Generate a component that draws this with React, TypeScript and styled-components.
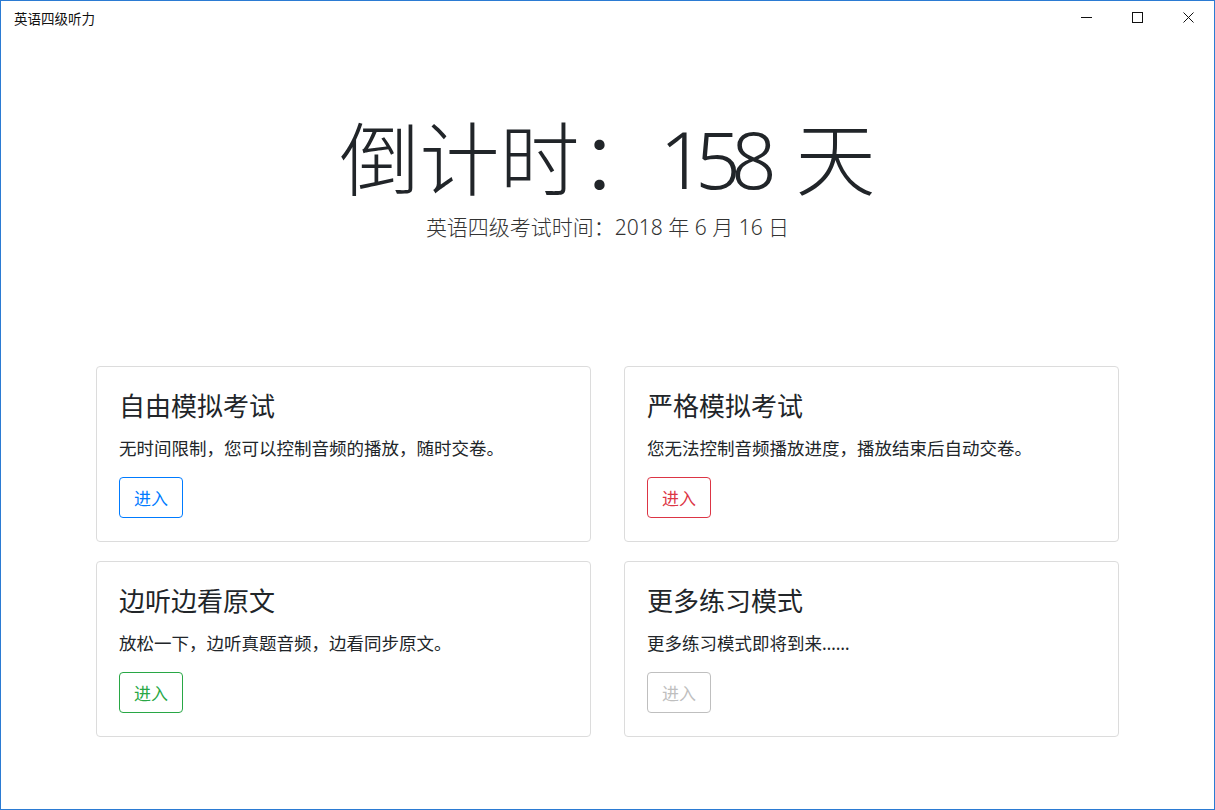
import styled, { createGlobalStyle } from 'styled-components'

const GlobalStyle = createGlobalStyle`
  html, body {
    margin: 0;
    padding: 0;
    background: #ffffff;
  }
  body {
    font-family: "Noto Sans", "Noto Sans CJK SC", sans-serif;
    color: #212529;
  }
  * {
    box-sizing: border-box;
  }
`

const Window = styled.div`
  width: 1215px;
  height: 810px;
  border: 1px solid #2b7bd3;
  display: flex;
  flex-direction: column;
  background: #fff;
  overflow: hidden;
`

const TitleBar = styled.div`
  height: 33px;
  display: flex;
  align-items: center;
  justify-content: space-between;
  flex-shrink: 0;
`

const TitleText = styled.div`
  padding-left: 13px;
  font-size: 13.5px;
  color: #111;
  font-family: "Noto Sans CJK SC", sans-serif;
`

const WindowButtons = styled.div`
  display: flex;
  height: 100%;
`

const WindowButton = styled.div`
  width: 51px;
  height: 100%;
  display: flex;
  align-items: center;
  justify-content: center;
  color: #111;
`

const Hero = styled.header`
  display: flex;
  flex-direction: column;
  align-items: center;
  padding-top: 76px;
`

const Countdown = styled.h1`
  margin: 0;
  font-size: 80px;
  font-weight: 300;
  line-height: 1.2;
  color: #212529;
`

// the digits in the reference are narrower than Noto Sans ones
const Days = styled.span`
  letter-spacing: -10px;
  margin-right: 8px;
`

const ExamDate = styled.p`
  margin: 6px 0 0;
  font-size: 21px;
  font-weight: 300;
  line-height: 1.5;
  color: #333;
`

const CardGrid = styled.main`
  display: grid;
  grid-template-columns: 495px 495px;
  column-gap: 33px;
  row-gap: 19px;
  justify-content: center;
  margin-top: 122px;
`

const Card = styled.section`
  border: 1px solid #dcdcdc;
  border-radius: 4px;
  padding: 24px 22px 22px;
  display: flex;
  flex-direction: column;
  align-items: flex-start;
  height: 176px;
`

const CardTitle = styled.h5`
  margin: 0 0 13px;
  font-size: 26px;
  font-weight: 400;
  line-height: 1.2;
  color: #212529;
`

const CardText = styled.p`
  margin: 0 0 16px;
  font-size: 17.5px;
  line-height: 1.5;
  color: #212529;
`

const variants = {
  primary: '#007bff',
  danger: '#dc3545',
  success: '#28a745',
  disabled: '#b4b4b4',
}

const EnterButton = styled.button<{ $variant: keyof typeof variants }>`
  height: 41px;
  padding: 0 14px;
  font-family: "Noto Sans CJK SC", sans-serif;
  font-size: 17px;
  line-height: 1;
  background: transparent;
  border: 1px solid ${({ $variant }) => variants[$variant]};
  color: ${({ $variant }) => variants[$variant]};
  border-radius: 4px;
  cursor: ${({ $variant }) => ($variant === 'disabled' ? 'default' : 'pointer')};
  opacity: ${({ $variant }) => ($variant === 'disabled' ? 0.85 : 1)};
`

const modes = [
  {
    title: '自由模拟考试',
    text: '无时间限制，您可以控制音频的播放，随时交卷。',
    variant: 'primary' as const,
  },
  {
    title: '严格模拟考试',
    text: '您无法控制音频播放进度，播放结束后自动交卷。',
    variant: 'danger' as const,
  },
  {
    title: '边听边看原文',
    text: '放松一下，边听真题音频，边看同步原文。',
    variant: 'success' as const,
  },
  {
    title: '更多练习模式',
    text: '更多练习模式即将到来……',
    variant: 'disabled' as const,
  },
]

export default function App() {
  return (
    <>
      <GlobalStyle />
      <Window>
        <TitleBar>
          <TitleText>英语四级听力</TitleText>
          <WindowButtons>
            <WindowButton>
              <svg width="11" height="11" viewBox="0 0 11 11">
                <path d="M0 5.5h11" stroke="currentColor" strokeWidth="1" />
              </svg>
            </WindowButton>
            <WindowButton>
              <svg width="11" height="11" viewBox="0 0 11 11">
                <rect x="0.5" y="0.5" width="10" height="10" fill="none" stroke="currentColor" strokeWidth="1" />
              </svg>
            </WindowButton>
            <WindowButton>
              <svg width="11" height="11" viewBox="0 0 11 11">
                <path d="M0.5 0.5l10 10M10.5 0.5l-10 10" stroke="currentColor" strokeWidth="1" />
              </svg>
            </WindowButton>
          </WindowButtons>
        </TitleBar>

        <Hero>
          <Countdown>
            倒计时：<Days>158</Days> 天
          </Countdown>
          <ExamDate>英语四级考试时间：2018 年 6 月 16 日</ExamDate>
        </Hero>

        <CardGrid>
          {modes.map(mode => (
            <Card key={mode.title}>
              <CardTitle>{mode.title}</CardTitle>
              <CardText>{mode.text}</CardText>
              <EnterButton $variant={mode.variant} disabled={mode.variant === 'disabled'}>
                进入
              </EnterButton>
            </Card>
          ))}
        </CardGrid>
      </Window>
    </>
  )
}
